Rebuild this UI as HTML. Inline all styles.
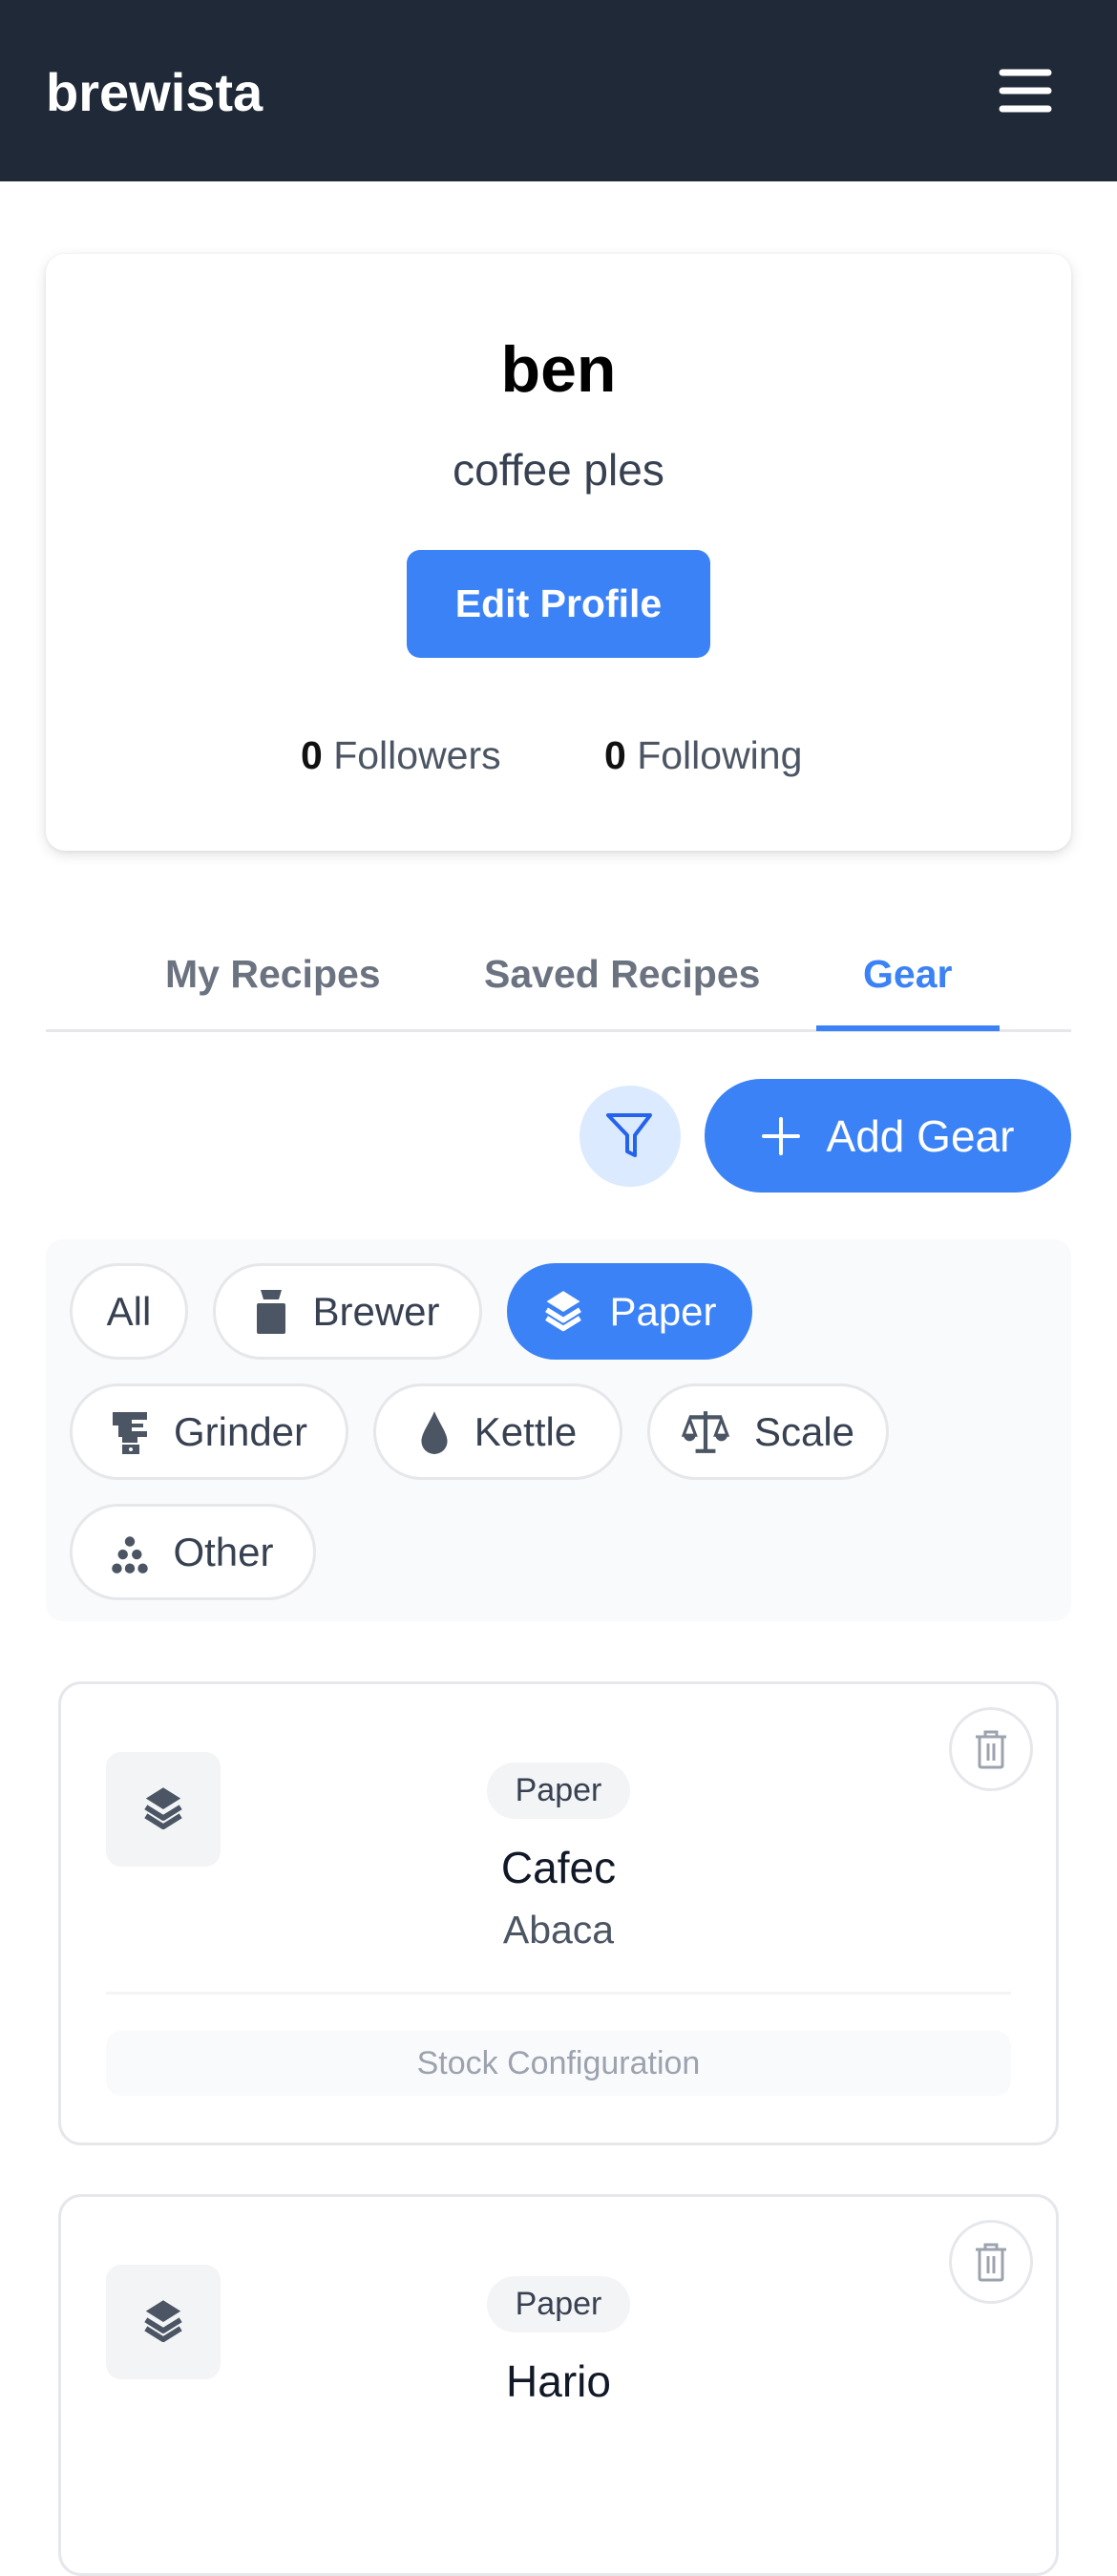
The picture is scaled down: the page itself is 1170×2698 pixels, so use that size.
<!DOCTYPE html>
<html><head><meta charset="utf-8"><style>
*{margin:0;padding:0;box-sizing:border-box}
body{width:1170px;height:2532px;overflow:hidden;background:#fff;font-family:"Liberation Sans",Arial,sans-serif;position:relative;color:#111827}
.a{position:absolute}
.hdr{left:0;top:0;width:1170px;height:190px;background:#1f2937}
.c{display:flex;align-items:center;justify-content:center}
.chip{position:absolute;height:101px;border:3px solid #e5e7eb;background:#fff;border-radius:51px;display:flex;align-items:center;justify-content:center;gap:26px;font-size:42px;color:#374151}
.chip svg{width:44px;height:48px}
.card{position:absolute;left:61px;width:1048px;border:3px solid #e5e7eb;border-radius:24px;background:#fff}
</style></head><body>
<div class="a hdr"></div>
<div class="a" style="left:48px;top:64px;font-size:56px;font-weight:bold;color:#fff;line-height:66px">brewista</div>
<svg class="a" style="left:1046px;top:70px" width="56" height="50" viewBox="0 0 56 50"><g stroke="#fff" stroke-width="7" stroke-linecap="round"><line x1="4" y1="6" x2="52" y2="6"/><line x1="4" y1="25" x2="52" y2="25"/><line x1="4" y1="44" x2="52" y2="44"/></g></svg>

<div class="a" style="left:48px;top:266px;width:1074px;height:625px;border-radius:20px;box-shadow:0 4px 14px rgba(0,0,0,.12),0 1px 4px rgba(0,0,0,.06);background:#fff"></div>
<div class="a c" style="left:48px;top:345px;width:1074px;height:84px;font-size:68px;font-weight:bold;color:#000">ben</div>
<div class="a c" style="left:48px;top:462px;width:1074px;height:60px;font-size:46px;color:#374151">coffee ples</div>
<div class="a c" style="left:426px;top:576px;width:318px;height:113px;background:#3b82f6;border-radius:14px;color:#fff;font-size:41px;font-weight:bold">Edit Profile</div>
<div class="a" style="left:315px;top:766px;font-size:41px;color:#4b5563;line-height:50px"><b style="color:#111">0</b> Followers</div>
<div class="a" style="left:633px;top:766px;font-size:41px;color:#4b5563;line-height:50px"><b style="color:#111">0</b> Following</div>

<div class="a" style="left:173px;top:995px;font-size:41px;color:#6b7280;font-weight:bold;line-height:50px">My Recipes</div>
<div class="a" style="left:507px;top:995px;font-size:41px;color:#6b7280;font-weight:bold;line-height:50px">Saved Recipes</div>
<div class="a" style="left:904px;top:995px;font-size:41px;color:#3b82f6;font-weight:bold;line-height:50px">Gear</div>
<div class="a" style="left:48px;top:1078px;width:1074px;height:3px;background:#e5e7eb"></div>
<div class="a" style="left:855px;top:1074px;width:192px;height:6px;background:#3b82f6"></div>

<div class="a c" style="left:607px;top:1137px;width:106px;height:106px;border-radius:53px;background:#dbeafe">
<svg width="54" height="54" viewBox="0 0 54 54"><path d="M4 5H48L32 26V47L24 43V26Z" fill="none" stroke="#2563eb" stroke-width="4" stroke-linejoin="round"/></svg></div>
<div class="a c" style="left:738px;top:1130px;width:384px;height:119px;border-radius:60px;background:#3b82f6;color:#fff;font-size:46px;gap:28px">
<svg width="40" height="40" viewBox="0 0 40 40"><g stroke="#fff" stroke-width="4" stroke-linecap="round"><line x1="20" y1="2" x2="20" y2="38"/><line x1="2" y1="20" x2="38" y2="20"/></g></svg><span>Add Gear</span></div>

<div class="a" style="left:48px;top:1298px;width:1074px;height:400px;background:#f9fafb;border-radius:18px"></div>
<div class="chip" style="left:73px;top:1323px;width:124px">All</div>
<div class="chip" style="left:223px;top:1323px;width:282px"><svg viewBox="0 0 34 46" style="width:34px"><path d="M6 0H28L25 10H9Z M4 14H30Q32 14 32 16V44Q32 46 30 46H4Q2 46 2 44V16Q2 14 4 14Z" fill="#4b5563"/></svg><span>Brewer</span></div>
<div class="chip" style="left:531px;top:1323px;width:257px;background:#3b82f6;border-color:#3b82f6;color:#fff"><svg viewBox="0 0 40 44"><path d="M20 2L36 12L20 22L4 12Z" fill="#fff"/><path d="M4 20L20 30L36 20M4 28L20 38L36 28" fill="none" stroke="#fff" stroke-width="5" stroke-linejoin="round"/></svg><span>Paper</span></div>
<div class="chip" style="left:73px;top:1449px;width:292px"><svg viewBox="0 0 40 46" style="width:40px"><path d="M2 2H38V10H22V14H34V18H22V22H38V28H28V34H12V28H8V16H2Z M12 36H30V46H12Z" fill="#4b5563"/><circle cx="21" cy="41" r="2" fill="#fff"/></svg><span>Grinder</span></div>
<div class="chip" style="left:391px;top:1449px;width:261px"><svg viewBox="0 0 30 46" style="width:32px"><path d="M15 2C20 14 28 24 28 32A13 13 0 0 1 2 32C2 24 10 14 15 2Z" fill="#4b5563"/></svg><span>Kettle</span></div>
<div class="chip" style="left:678px;top:1449px;width:253px"><svg viewBox="0 0 48 46" style="width:50px"><path d="M24 2V40M8 8H40M14 42H34" stroke="#4b5563" stroke-width="4" fill="none"/><path d="M8 10L2 26H14Z M40 10L34 26H46Z" fill="none" stroke="#4b5563" stroke-width="3"/><path d="M2 26A6 6 0 0 0 14 26Z M34 26A6 6 0 0 0 46 26Z" fill="#4b5563"/></svg><span>Scale</span></div>
<div class="chip" style="left:73px;top:1575px;width:258px"><svg viewBox="0 0 36 46" style="width:38px"><circle cx="18" cy="12" r="5" fill="#4b5563"/><circle cx="11" cy="25" r="5" fill="#4b5563"/><circle cx="25" cy="25" r="5" fill="#4b5563"/><circle cx="5" cy="39" r="5" fill="#4b5563"/><circle cx="18" cy="39" r="5" fill="#4b5563"/><circle cx="31" cy="39" r="5" fill="#4b5563"/></svg><span>Other</span></div>

<div class="card" style="top:1761px;height:486px"></div>
<div class="a c" style="left:111px;top:1835px;width:120px;height:120px;background:#f3f4f6;border-radius:16px"><svg width="52" height="50" viewBox="0 0 40 44"><path d="M20 2L36 12L20 22L4 12Z" fill="#4b5563"/><path d="M4 20L20 30L36 20M4 28L20 38L36 28" fill="none" stroke="#4b5563" stroke-width="5" stroke-linejoin="round"/></svg></div>
<div class="a c" style="left:994px;top:1788px;width:88px;height:88px;border:3px solid #e5e7eb;border-radius:44px;background:#fff"><svg width="36" height="42" viewBox="0 0 36 42"><path d="M2 8H34M12 8V3H24V8M6 8V38Q6 40 8 40H28Q30 40 30 38V8M15 15V33M21 15V33" fill="none" stroke="#9ca3af" stroke-width="3"/></svg></div>
<div class="a c" style="left:510px;top:1846px;width:150px;height:59px;background:#f3f4f6;border-radius:30px;font-size:34px;color:#374151">Paper</div>
<div class="a c" style="left:61px;top:1928px;width:1048px;height:56px;font-size:46px;color:#111827">Cafec</div>
<div class="a c" style="left:61px;top:1994px;width:1048px;height:54px;font-size:41px;color:#4b5563">Abaca</div>
<div class="a" style="left:111px;top:2086px;width:948px;height:3px;background:#f3f4f6"></div>
<div class="a c" style="left:111px;top:2127px;width:948px;height:68px;background:#f9fafb;border-radius:16px;font-size:34px;color:#9ca3af">Stock Configuration</div>

<div class="card" style="top:2298px;height:400px"></div>
<div class="a c" style="left:111px;top:2372px;width:120px;height:120px;background:#f3f4f6;border-radius:16px"><svg width="52" height="50" viewBox="0 0 40 44"><path d="M20 2L36 12L20 22L4 12Z" fill="#4b5563"/><path d="M4 20L20 30L36 20M4 28L20 38L36 28" fill="none" stroke="#4b5563" stroke-width="5" stroke-linejoin="round"/></svg></div>
<div class="a c" style="left:994px;top:2325px;width:88px;height:88px;border:3px solid #e5e7eb;border-radius:44px;background:#fff"><svg width="36" height="42" viewBox="0 0 36 42"><path d="M2 8H34M12 8V3H24V8M6 8V38Q6 40 8 40H28Q30 40 30 38V8M15 15V33M21 15V33" fill="none" stroke="#9ca3af" stroke-width="3"/></svg></div>
<div class="a c" style="left:510px;top:2384px;width:150px;height:59px;background:#f3f4f6;border-radius:30px;font-size:34px;color:#374151">Paper</div>
<div class="a c" style="left:61px;top:2466px;width:1048px;height:56px;font-size:46px;color:#111827">Hario</div>
</body></html>
